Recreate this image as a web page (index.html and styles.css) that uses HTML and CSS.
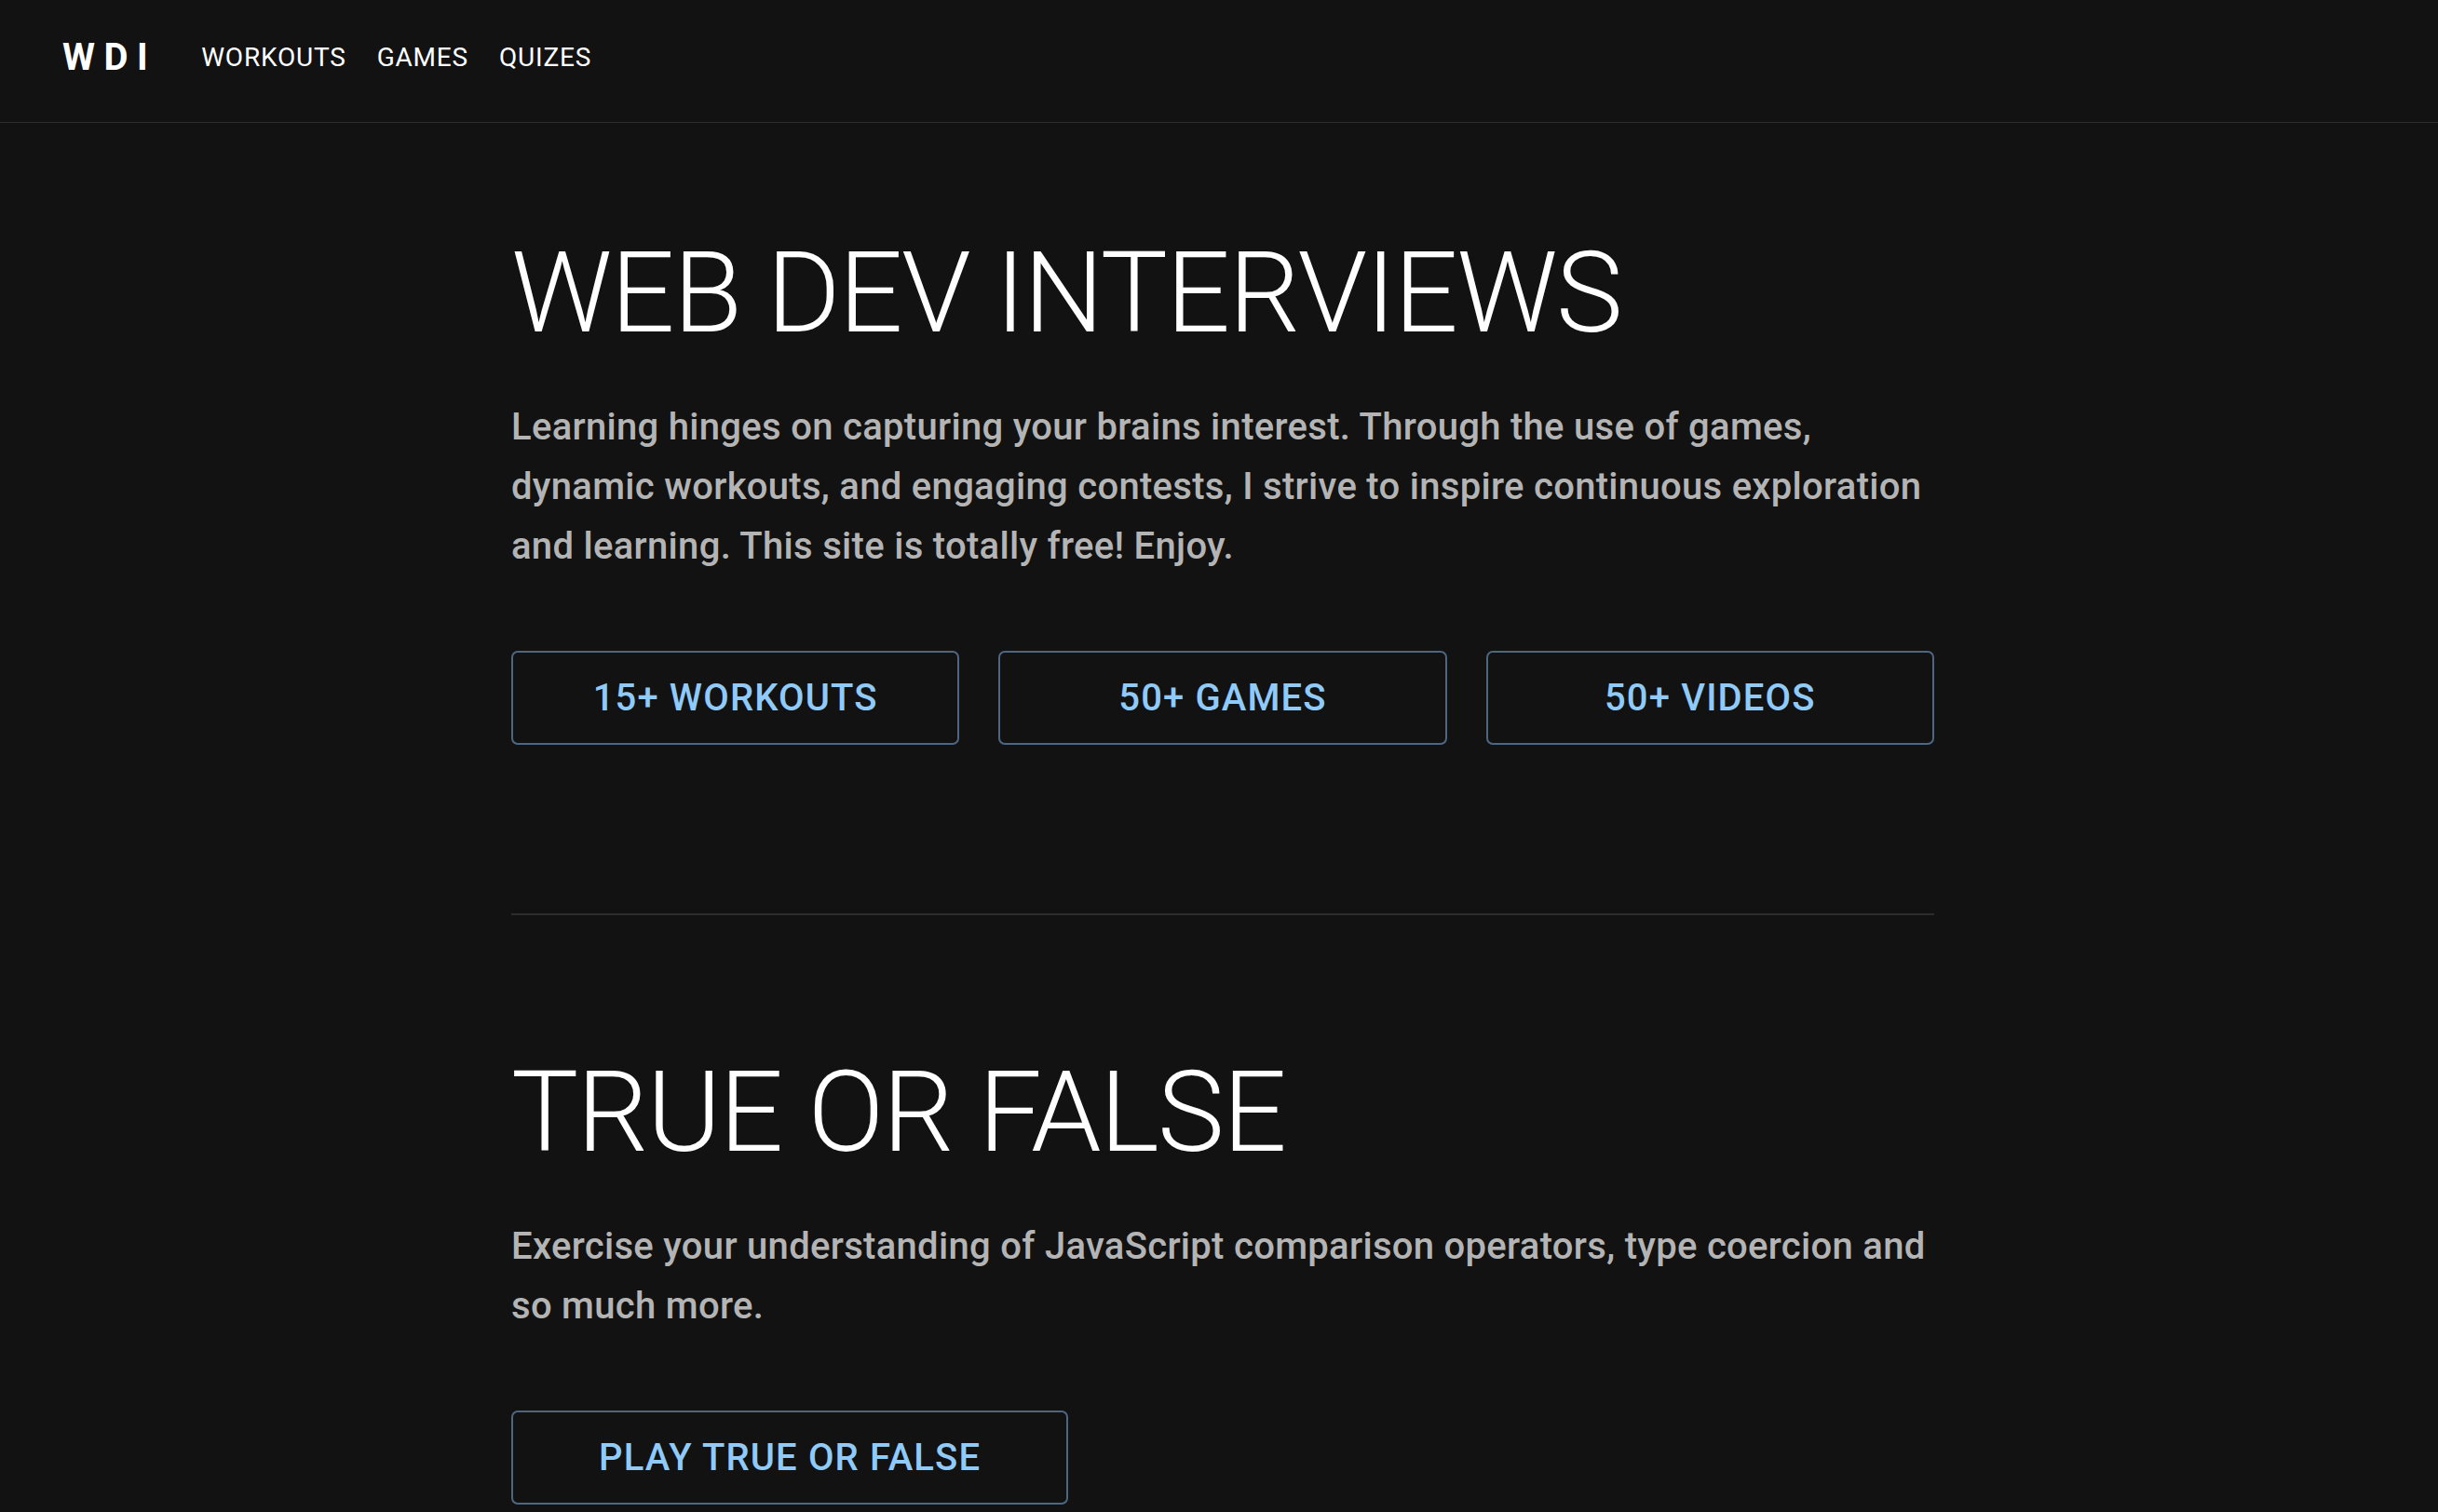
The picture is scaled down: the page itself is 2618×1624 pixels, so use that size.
FILE: index.html
```html
<!DOCTYPE html>
<html lang="en">
<head>
<meta charset="utf-8">
<title>Web Dev Interviews</title>
<link rel="stylesheet" href="styles.css">
</head>
<body>
<header class="topbar">
  <div class="logo">WDI</div>
  <nav class="nav">
    <a class="nav-link" href="#">WORKOUTS</a>
    <a class="nav-link" href="#">GAMES</a>
    <a class="nav-link" href="#">QUIZES</a>
  </nav>
</header>
<main class="main">
  <div class="container">
    <section class="hero">
      <h1 class="title">WEB DEV INTERVIEWS</h1>
      <p class="lead">Learning hinges on capturing your brains interest. Through the use of games, dynamic workouts, and engaging contests, I strive to inspire continuous exploration and learning. This site is totally free! Enjoy.</p>
      <div class="stats">
        <a class="btn" href="#">15+ WORKOUTS</a>
        <a class="btn" href="#">50+ GAMES</a>
        <a class="btn" href="#">50+ VIDEOS</a>
      </div>
    </section>
    <hr class="divider">
    <section class="game">
      <h2 class="title">TRUE OR FALSE</h2>
      <p class="lead">Exercise your understanding of JavaScript comparison operators, type coercion and so much more.</p>
      <div class="actions">
        <a class="btn btn-wide" href="#">PLAY TRUE OR FALSE</a>
      </div>
    </section>
  </div>
</main>
</body>
</html>
```

FILE: styles.css
```css
html, body {
  margin: 0;
  padding: 0;
  background: #121212;
  color: #ffffff;
  font-family: Roboto, "Liberation Sans", Arial, sans-serif;
}

.topbar {
  box-sizing: border-box;
  height: 132px;
  display: flex;
  align-items: center;
  padding: 0 0 8px 67px;
  border-bottom: 1px solid #2c2c2c;
}

.logo {
  font-size: 40px;
  font-weight: 700;
  letter-spacing: 9.5px;
  margin-right: 48px;
}

.nav {
  display: flex;
  gap: 33px;
}

.nav-link {
  color: #ffffff;
  text-decoration: none;
  font-size: 28px;
  font-weight: 400;
  letter-spacing: 0.8px;
}

.main {
  padding-left: 8px;
}

.container {
  width: 1528px;
  margin: 0 auto;
}

.title {
  margin: 113px 0 0;
  font-size: 121px;
  font-weight: 300;
  line-height: 141px;
  letter-spacing: -1.7px;
}

.lead {
  margin: 41px 0 0;
  font-size: 40px;
  font-weight: 500;
  line-height: 64px;
  letter-spacing: 0.3px;
  color: rgba(255, 255, 255, 0.7);
}

.stats {
  margin-top: 80px;
  display: grid;
  grid-template-columns: repeat(3, 1fr);
  gap: 42px;
}

.btn {
  box-sizing: border-box;
  height: 101px;
  display: flex;
  align-items: center;
  justify-content: center;
  border: 2px solid #4e6781;
  border-radius: 7px;
  color: #90caf9;
  text-decoration: none;
  font-size: 40px;
  font-weight: 500;
  letter-spacing: 1.14px;
}

.divider {
  margin: 181px 0 0;
  height: 2px;
  border: 0;
  background: #2c2c2c;
}

.game .title {
  margin-top: 142px;
}

.actions {
  margin-top: 80px;
  display: flex;
}

.btn-wide {
  padding: 0 92px;
}
```
